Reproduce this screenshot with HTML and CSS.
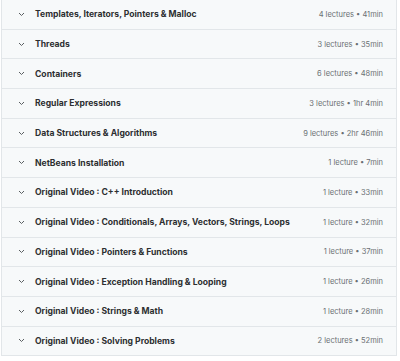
FILE: index.html
```html
<!DOCTYPE html>
<html lang="en">
  <head>
    <meta charset="UTF-8" />
    <meta name="viewport" content="width=device-width, initial-scale=1.0" />
    <title>Course content</title>
    <link rel="stylesheet" href="styles.css">
  </head>
  <body>
    <div class="curriculum">
      <div class="section">
        <span class="chevron"><svg width="7" height="5" viewBox="0 0 7 5"><path d="M1 1l2.5 2.5L6 1" /></svg></span>
        <span class="title">Templates, Iterators, Pointers &amp; Malloc</span>
        <span class="meta">4 lectures • 41min</span>
      </div>
      <div class="section">
        <span class="chevron"><svg width="7" height="5" viewBox="0 0 7 5"><path d="M1 1l2.5 2.5L6 1" /></svg></span>
        <span class="title">Threads</span>
        <span class="meta">3 lectures • 35min</span>
      </div>
      <div class="section">
        <span class="chevron"><svg width="7" height="5" viewBox="0 0 7 5"><path d="M1 1l2.5 2.5L6 1" /></svg></span>
        <span class="title">Containers</span>
        <span class="meta">6 lectures • 48min</span>
      </div>
      <div class="section">
        <span class="chevron"><svg width="7" height="5" viewBox="0 0 7 5"><path d="M1 1l2.5 2.5L6 1" /></svg></span>
        <span class="title">Regular Expressions</span>
        <span class="meta">3 lectures • 1hr 4min</span>
      </div>
      <div class="section">
        <span class="chevron"><svg width="7" height="5" viewBox="0 0 7 5"><path d="M1 1l2.5 2.5L6 1" /></svg></span>
        <span class="title">Data Structures &amp; Algorithms</span>
        <span class="meta">9 lectures • 2hr 46min</span>
      </div>
      <div class="section">
        <span class="chevron"><svg width="7" height="5" viewBox="0 0 7 5"><path d="M1 1l2.5 2.5L6 1" /></svg></span>
        <span class="title">NetBeans Installation</span>
        <span class="meta">1 lecture • 7min</span>
      </div>
      <div class="section">
        <span class="chevron"><svg width="7" height="5" viewBox="0 0 7 5"><path d="M1 1l2.5 2.5L6 1" /></svg></span>
        <span class="title">Original Video : C++ Introduction</span>
        <span class="meta">1 lecture • 33min</span>
      </div>
      <div class="section">
        <span class="chevron"><svg width="7" height="5" viewBox="0 0 7 5"><path d="M1 1l2.5 2.5L6 1" /></svg></span>
        <span class="title">Original Video : Conditionals, Arrays, Vectors, Strings, Loops</span>
        <span class="meta">1 lecture • 32min</span>
      </div>
      <div class="section">
        <span class="chevron"><svg width="7" height="5" viewBox="0 0 7 5"><path d="M1 1l2.5 2.5L6 1" /></svg></span>
        <span class="title">Original Video : Pointers &amp; Functions</span>
        <span class="meta">1 lecture • 37min</span>
      </div>
      <div class="section">
        <span class="chevron"><svg width="7" height="5" viewBox="0 0 7 5"><path d="M1 1l2.5 2.5L6 1" /></svg></span>
        <span class="title">Original Video : Exception Handling &amp; Looping</span>
        <span class="meta">1 lecture • 26min</span>
      </div>
      <div class="section">
        <span class="chevron"><svg width="7" height="5" viewBox="0 0 7 5"><path d="M1 1l2.5 2.5L6 1" /></svg></span>
        <span class="title">Original Video : Strings &amp; Math</span>
        <span class="meta">1 lecture • 28min</span>
      </div>
      <div class="section">
        <span class="chevron"><svg width="7" height="5" viewBox="0 0 7 5"><path d="M1 1l2.5 2.5L6 1" /></svg></span>
        <span class="title">Original Video : Solving Problems</span>
        <span class="meta">2 lectures • 52min</span>
      </div>
    </div>
  </body>
</html>
```

FILE: styles.css
```css
body {
  margin: 0;
  padding: 0;
  background-color: #fff;
  font-family: Inter, "Noto Sans", sans-serif;
}

.curriculum {
  width: 394px;
  margin-left: 1px;
  border-left: 1px solid #e2e6e9;
  border-right: 1px solid #e2e6e9;
  background-color: #f7f9fa;
}

.section {
  display: flex;
  align-items: center;
  height: 28.7px;
  border-bottom: 1px solid #e2e6e9;
  padding: 0 13px 0 16px;
}

.chevron {
  display: flex;
  width: 17px;
}

.chevron svg path {
  fill: none;
  stroke: #5a5e61;
  stroke-width: 1;
}

.title {
  flex: 1;
  font-size: 8.6px;
  font-weight: 700;
  color: #2d2f31;
}

.meta {
  font-size: 7.5px;
  color: #6a6f73;
}
```
